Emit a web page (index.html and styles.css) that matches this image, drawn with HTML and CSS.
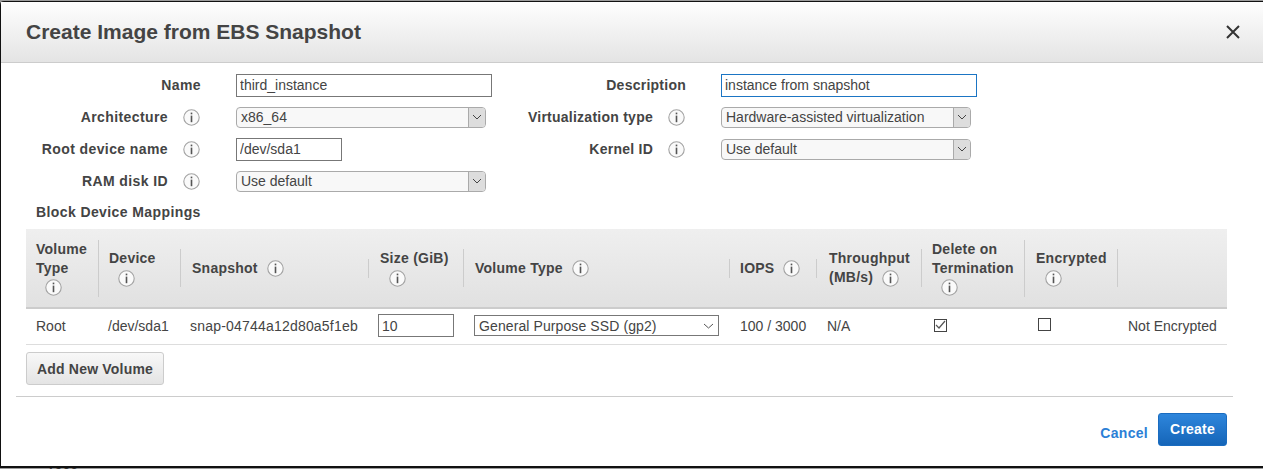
FILE: index.html
```html
<!DOCTYPE html>
<html lang="en">
<head>
  <meta charset="UTF-8">
  <title>Create Image from EBS Snapshot</title>
  <link rel="stylesheet" href="styles.css">
</head>
<body>
  <svg class="defs" width="0" height="0">
    <symbol id="info" viewBox="0 0 17 17">
      <circle cx="8.5" cy="8.5" r="7.7" fill="#fafafa" stroke="#a3a3a3" stroke-width="1.1"/>
      <rect x="7.7" y="3.6" width="1.6" height="1.7" fill="#555"/>
      <rect x="7.7" y="6.6" width="1.6" height="6.6" fill="#555"/>
    </symbol>
  </svg>

  <div class="modal">
    <header class="modal-head">
      <h1>Create Image from EBS Snapshot</h1>
      <svg class="close" width="14" height="14" viewBox="0 0 14 14"><path d="M1 1l12 12M13 1L1 13" stroke="#333" stroke-width="2"/></svg>
    </header>

    <div class="form">
      <div class="field">
        <label>Name</label>
        <input class="text wide" value="third_instance">
      </div>
      <div class="field right">
        <label>Description</label>
        <input class="text wide focus" value="instance from snapshot">
      </div>
      <div class="field">
        <label>Architecture</label><svg class="i"><use href="#info"/></svg>
        <div class="select"><span>x86_64</span><b><svg width="10" height="6" viewBox="0 0 10 6"><path d="M1 1l4 4 4-4" fill="none" stroke="#444"/></svg></b></div>
      </div>
      <div class="field right">
        <label>Virtualization type</label><svg class="i"><use href="#info"/></svg>
        <div class="select"><span>Hardware-assisted virtualization</span><b><svg width="10" height="6" viewBox="0 0 10 6"><path d="M1 1l4 4 4-4" fill="none" stroke="#444"/></svg></b></div>
      </div>
      <div class="field">
        <label>Root device name</label><svg class="i"><use href="#info"/></svg>
        <input class="text short" value="/dev/sda1">
      </div>
      <div class="field right">
        <label>Kernel ID</label><svg class="i"><use href="#info"/></svg>
        <div class="select"><span>Use default</span><b><svg width="10" height="6" viewBox="0 0 10 6"><path d="M1 1l4 4 4-4" fill="none" stroke="#444"/></svg></b></div>
      </div>
      <div class="field">
        <label>RAM disk ID</label><svg class="i"><use href="#info"/></svg>
        <div class="select"><span>Use default</span><b><svg width="10" height="6" viewBox="0 0 10 6"><path d="M1 1l4 4 4-4" fill="none" stroke="#444"/></svg></b></div>
      </div>
    </div>

    <h2 class="mappings">Block Device Mappings</h2>

    <table class="volumes">
      <colgroup>
        <col class="c1"><col class="c2"><col class="c3"><col class="c4"><col class="c5">
        <col class="c6"><col class="c7"><col class="c8"><col class="c9"><col class="c10">
      </colgroup>
      <thead>
        <tr>
          <th><div>Volume<br>Type<br><svg class="i ind"><use href="#info"/></svg></div></th>
          <th><div>Device<br><svg class="i ind"><use href="#info"/></svg></div></th>
          <th class="pad"><div>Snapshot<svg class="i gap"><use href="#info"/></svg></div></th>
          <th class="pad"><div>Size (GiB)<br><svg class="i ind"><use href="#info"/></svg></div></th>
          <th class="pad"><div>Volume Type<svg class="i gap"><use href="#info"/></svg></div></th>
          <th><div>IOPS<svg class="i gap"><use href="#info"/></svg></div></th>
          <th class="pad2"><div>Throughput<br>(MB/s)<svg class="i gap"><use href="#info"/></svg></div></th>
          <th><div>Delete on<br>Termination<br><svg class="i ind"><use href="#info"/></svg></div></th>
          <th class="pad"><div>Encrypted<br><svg class="i ind"><use href="#info"/></svg></div></th>
          <th><div class="empty"></div></th>
        </tr>
      </thead>
      <tbody>
        <tr>
          <td>Root</td>
          <td class="tight">/dev/sda1</td>
          <td class="tight snap">snap-04744a12d80a5f1eb</td>
          <td class="tight"><input class="text size" value="10"></td>
          <td>
            <div class="flat-select">General Purpose SSD (gp2)<svg width="11" height="6" viewBox="0 0 11 6"><path d="M1 1l4.5 4L10 1" fill="none" stroke="#555"/></svg></div>
          </td>
          <td>100 / 3000</td>
          <td>N/A</td>
          <td class="box"><span class="check"><svg width="11" height="10" viewBox="0 0 11 10"><path d="M1 5l3 3 6-7" fill="none" stroke="#555" stroke-width="1.2"/></svg></span></td>
          <td class="box"><span class="check up"></span></td>
          <td>Not Encrypted</td>
        </tr>
      </tbody>
    </table>

    <div class="add-row"><button class="btn add">Add New Volume</button></div>

    <footer class="modal-foot">
      <a class="cancel">Cancel</a>
      <button class="btn primary">Create</button>
    </footer>
  </div>

  <div class="behind"><span>1903</span></div>
</body>
</html>
```

FILE: styles.css
```css
html, body {
  margin: 0;
  height: 469px;
  overflow: hidden;
}
body {
  box-sizing: border-box;
  padding-top: 1px;
  background: #9c9c9c;
  font-family: "Liberation Sans", Arial, sans-serif;
  font-size: 14px;
  color: #444;
}
.defs {
  display: block;
}
.modal {
  height: 464px;
  background: white;
  border: 1px solid #111;
  border-right: none;
  border-bottom-width: 2px;
  border-radius: 4px 0 0 0;
}
.modal-head {
  height: 60px;
  display: flex;
  align-items: center;
  justify-content: space-between;
  padding: 0 23px 0 25px;
  background: linear-gradient(to bottom, #fefefe, #e4e4e4);
  border-bottom: 1px solid #ccc;
}
.modal-head h1 {
  margin: 0;
  font-size: 21px;
  color: #444;
}
.form {
  display: grid;
  grid-template-columns: 492px 1fr;
  grid-auto-rows: 32px;
  padding-top: 6px;
}
.field {
  display: flex;
  align-items: center;
}
.field label {
  width: 167px;
  text-align: right;
  font-weight: bold;
  letter-spacing: .4px;
  flex: none;
}
.field svg.i {
  margin: 0 36px 0 15px;
}
.field > label:nth-last-child(2) {
  width: 200px;
  margin-right: 35px;
}
.field.right label {
  width: 160px;
  letter-spacing: .25px;
}
.field.right > label:nth-last-child(2) {
  width: 193px;
  margin-right: 35px;
}
.i {
  width: 17px;
  height: 17px;
  vertical-align: middle;
  flex: none;
}
.text {
  box-sizing: border-box;
  height: 23px;
  border: 1px solid #777;
  padding: 0 3px;
  font: 14px "Liberation Sans", Arial, sans-serif;
  color: #444;
  outline: none;
}
.wide {
  width: 256px;
}
.short {
  width: 106px;
}
.focus {
  border-color: #1b75c4;
}
.select {
  box-sizing: border-box;
  width: 250px;
  height: 21px;
  display: flex;
  justify-content: space-between;
  border: 1px solid #aaa;
  border-radius: 4px;
  background: #f8f8f8;
  line-height: 19px;
  padding-left: 4px;
}
.select b {
  width: 16px;
  display: flex;
  align-items: center;
  justify-content: center;
  background: #ddd;
  border-left: 1px solid #aaa;
  border-radius: 0 3px 3px 0;
}
.mappings {
  margin: 0;
  padding: 6px 0 0 35px;
  font-size: 14px;
  line-height: 18px;
  letter-spacing: .4px;
}
.volumes {
  width: 1201px;
  margin: 8px 0 0 25px;
  border-collapse: collapse;
  table-layout: fixed;
}
.c1 { width: 73px; }
.c2 { width: 82px; }
.c3 { width: 188px; }
.c4 { width: 95px; }
.c5 { width: 266px; }
.c6 { width: 87px; }
.c7 { width: 105px; }
.c8 { width: 103px; }
.c9 { width: 93px; }
.c10 { width: 109px; }
.volumes th {
  height: 78px;
  padding: 0;
  background: linear-gradient(to bottom, #efefef, #e1e1e1);
  border-bottom: 2px solid #ccc;
  text-align: left;
  font-size: 14px;
  line-height: 19px;
  letter-spacing: .25px;
  vertical-align: middle;
}
.volumes th div {
  padding-left: 10px;
  border-right: 1px solid #ccc;
  box-shadow: 1px 0 0 #fafafa;
}
.volumes th.pad div {
  padding-left: 11px;
}
.volumes th.pad2 div {
  padding-left: 12px;
}
.volumes th .empty {
  min-height: 38px;
  border: none;
  box-shadow: none;
}
.ind {
  margin-left: 9px;
}
.gap {
  margin-left: 9px;
}
.volumes td {
  height: 33px;
  padding: 0 0 2px 10px;
  border-bottom: 1px solid #ddd;
  white-space: nowrap;
}
.volumes td.tight {
  padding-left: 9px;
}
.volumes td.snap {
  letter-spacing: .2px;
}
.volumes td.box {
  padding-left: 12px;
}
.size {
  width: 76px;
  display: block;
}
.flat-select {
  box-sizing: border-box;
  width: 245px;
  height: 21px;
  display: flex;
  align-items: center;
  justify-content: space-between;
  border: 1px solid #777;
  padding: 0 4px;
  letter-spacing: .1px;
}
.check {
  box-sizing: border-box;
  width: 13px;
  height: 13px;
  display: block;
  border: 1px solid #444;
}
.check svg {
  display: block;
}
.check.up {
  margin-top: -2px;
  margin-left: 1px;
}
.add-row {
  padding: 7px 0 0 25px;
}
.btn {
  height: 33px;
  padding: 0;
  font: bold 14px "Liberation Sans", Arial, sans-serif;
  letter-spacing: .2px;
  color: #444;
  background: linear-gradient(to bottom, #f8f8f8, #e4e4e4);
  border: 1px solid #ccc;
  border-radius: 3px;
}
.btn.add {
  width: 138px;
}
.btn.primary {
  color: white;
  background: linear-gradient(to bottom, #2e86dc, #1565b8);
  border-color: #1a6cc0;
  width: 69px;
  padding-bottom: 2px;
}
.modal-foot {
  margin: 11px 30px 0 15px;
  padding: 16px 6px 0 0;
  border-top: 1px solid #ccc;
  display: flex;
  justify-content: flex-end;
  align-items: flex-start;
}
.cancel {
  margin: 12px 10px 0 0;
  font-weight: bold;
  letter-spacing: .3px;
  color: #2b7fd6;
}
.behind {
  height: 1px;
  padding-left: 47px;
  line-height: 14px;
  color: #333;
}
.behind span {
  display: block;
  margin-top: -2px;
}
```
